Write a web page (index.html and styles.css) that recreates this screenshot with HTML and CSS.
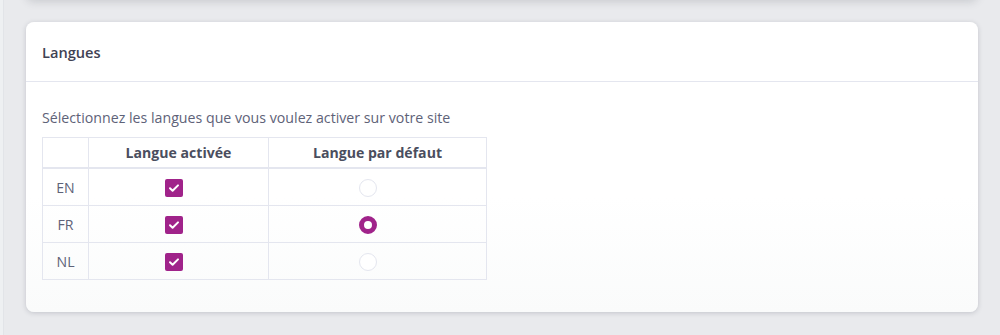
FILE: index.html
```html
<!DOCTYPE html>
<html lang="fr">
<head>
<meta charset="utf-8">
<title>Langues</title>
<link rel="stylesheet" href="styles.css">
</head>
<body>
<div class="side"></div>
<main class="main">
  <div class="prev-card"></div>
  <section class="card">
    <header class="card-header"><h3 class="card-title">Langues</h3></header>
    <div class="card-body">
      <p class="intro">Sélectionnez les langues que vous voulez activer sur votre site</p>
      <table class="lang-table">
        <thead>
          <tr><th class="c-code"></th><th class="c-act">Langue activée</th><th class="c-def">Langue par défaut</th></tr>
        </thead>
        <tbody>
          <tr><td class="code">EN</td><td><span class="chk"><svg viewBox="0 0 18 18" width="18" height="18"><path d="M5 9.3l2.6 2.5L13 6.4" fill="none" stroke="#fff" stroke-width="2" stroke-linecap="round" stroke-linejoin="round"/></svg></span></td><td><span class="radio"></span></td></tr>
          <tr><td class="code">FR</td><td><span class="chk"><svg viewBox="0 0 18 18" width="18" height="18"><path d="M5 9.3l2.6 2.5L13 6.4" fill="none" stroke="#fff" stroke-width="2" stroke-linecap="round" stroke-linejoin="round"/></svg></span></td><td><span class="radio on"></span></td></tr>
          <tr><td class="code">NL</td><td><span class="chk"><svg viewBox="0 0 18 18" width="18" height="18"><path d="M5 9.3l2.6 2.5L13 6.4" fill="none" stroke="#fff" stroke-width="2" stroke-linecap="round" stroke-linejoin="round"/></svg></span></td><td><span class="radio"></span></td></tr>
        </tbody>
      </table>
    </div>
  </section>
</main>
</body>
</html>
```

FILE: styles.css
```css
html, body {
  margin: 0;
  padding: 0;
}
body {
  background: #e9eaed;
  font-family: "Open Sans", "Noto Sans", sans-serif;
  color: #5e6278;
  display: flex;
  height: 335px;
  overflow: hidden;
}
.side {
  width: 3px;
  background: #eef0f2;
  border-right: 1px solid #e2e4e8;
  flex: none;
}
.main {
  flex: 1;
  padding: 0 22px 0 22px;
  display: flex;
  flex-direction: column;
}
.prev-card {
  height: 20px;
  margin-top: -20px;
  background: #fff;
  border-radius: 0 0 8px 8px;
  box-shadow: 0 2px 8px rgba(60, 64, 80, 0.18);
}
.card {
  margin-top: 22px;
  height: 290px;
  background: linear-gradient(to bottom, #ffffff 0%, #ffffff 60%, #fafbfb 100%);
  border-radius: 8px;
  box-shadow: 0 1px 5px rgba(60, 64, 80, 0.22);
  display: flex;
  flex-direction: column;
}
.card-header {
  height: 59px;
  border-bottom: 1px solid #e4e6ef;
  display: flex;
  align-items: center;
  padding: 0 16px;
}
.card-title {
  margin: 0;
  font-size: 14.6px;
  font-weight: 600;
  color: #3f4254;
}
.card-body {
  padding: 26px 16px 0 16px;
}
.intro {
  margin: 0 0 9px 0;
  font-size: 14.2px;
  line-height: 20px;
  color: #5e6278;
}
.lang-table {
  border-collapse: collapse;
  width: 445px;
  font-size: 14.1px;
}
.lang-table th,
.lang-table td {
  border: 1px solid #e4e6ef;
  text-align: center;
  padding: 0;
}
.lang-table th {
  height: 29px;
  font-weight: 700;
  color: #4a4e5e;
  border-bottom: 2px solid #e4e6ef;
}
.c-code { width: 45px; }
.c-act { width: 179px; }
.lang-table td {
  height: 36px;
  vertical-align: middle;
}
.code {
  color: #5e6278;
}
.chk {
  display: inline-block;
  width: 18px;
  height: 18px;
  border-radius: 2px;
  background: #a0238a;
  vertical-align: middle;
  margin-right: 10px;
}
.chk svg { display: block; }
.radio {
  display: inline-block;
  box-sizing: border-box;
  width: 18px;
  height: 18px;
  border-radius: 50%;
  border: 1px solid #e4e6ef;
  background: #fff;
  vertical-align: middle;
  margin-right: 19px;
}
.radio.on {
  border: 5.5px solid #a0238a;
}
```
